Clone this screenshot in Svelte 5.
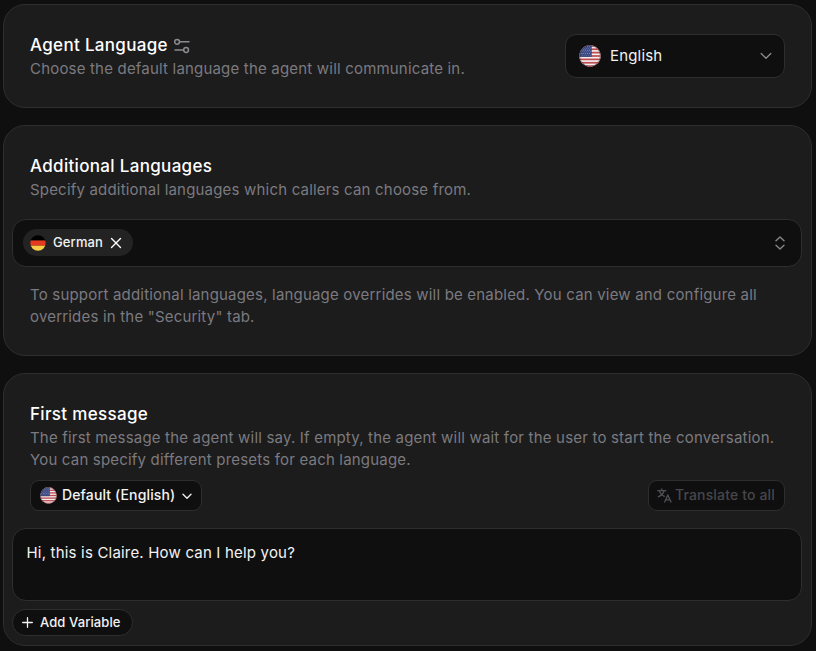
<script>
  const stripes = [0, 2, 4, 6, 8, 10, 12];
  const starRows = [1, 3, 5];
  const starCols = [1.5, 4, 6.5, 9, 11.5];
</script>

{#snippet usFlag(size, id)}
  <svg width={size} height={size} viewBox="0 0 26 26" aria-hidden="true">
    <clipPath {id}><circle cx="13" cy="13" r="12.6" /></clipPath>
    <g clip-path="url(#{id})">
      <rect width="26" height="26" fill="#f1eeee" />
      {#each stripes as row}
        <rect y={row * 2} width="26" height="2" fill="#bd4b50" />
      {/each}
      <rect width="15" height="14" fill="#38477f" />
      {#each starRows as y}
        {#each starCols as x}
          <circle cx={x + 1} cy={y * 2} r=".65" fill="#9ba4c9" />
          <circle cx={x + 2.2} cy={y * 2 + 2} r=".55" fill="#8b96bf" />
        {/each}
      {/each}
      <circle cx="13" cy="13" r="12.3" fill="none" stroke="#33242b" stroke-opacity=".5" />
    </g>
  </svg>
{/snippet}

<main>
  <section class="card language">
    <div class="head">
      <h2>Agent Language
        <svg width="16" height="16" viewBox="0 0 16 16" fill="none" stroke="#8b8b8f" stroke-width="1.5" stroke-linecap="round">
          <circle cx="3.1" cy="3.8" r="2.4" /><path d="M6 3.8H15M1 12H9.5" /><circle cx="12.1" cy="12" r="2.4" />
        </svg>
      </h2>
      <p>Choose the default language the agent will communicate in.</p>
    </div>
    <button class="select">
      {@render usFlag(22, "flag-large")}
      <span>English</span>
      <svg width="12" height="8" viewBox="0 0 12 8" fill="none" stroke="#8d8d91" stroke-width="1.3" stroke-linecap="round" stroke-linejoin="round"><path d="M1.2 1.5 6 6.3l4.8-4.8" /></svg>
    </button>
  </section>

  <section class="card additional">
    <div class="head">
      <h2>Additional Languages</h2>
      <p>Specify additional languages which callers can choose from.</p>
    </div>
    <div class="multi">
      <span class="chip">
        <svg width="16" height="16" viewBox="0 0 16 16"><clipPath id="german"><circle cx="8" cy="8" r="7.7" /></clipPath><g clip-path="url(#german)"><rect width="16" height="5.5" fill="#000" /><rect y="5.5" width="16" height="5.2" fill="#e43b20" /><rect y="10.7" width="16" height="5.3" fill="#f8ce46" /></g></svg>
        <span>German</span>
        <svg class="close" width="12" height="12" viewBox="0 0 12 12" fill="none" stroke="#fff" stroke-width="1.4" stroke-linecap="round"><path d="m1.5 1.5 9 9m0-9-9 9" /></svg>
      </span>
      <svg width="10" height="14" viewBox="0 0 10 14" fill="none" stroke="#858589" stroke-width="1.4" stroke-linecap="round" stroke-linejoin="round"><path d="M1 4.8 5 .9l4 3.9M1 9.2l4 3.9 4-3.9" /></svg>
    </div>
    <p class="note">To support additional languages, language overrides will be enabled. You can view and configure all<br />overrides in the "Security" tab.</p>
  </section>

  <section class="card message">
    <div class="head">
      <h2>First message</h2>
      <p>The first message the agent will say. If empty, the agent will wait for the user to start the conversation.<br />You can specify different presets for each language.</p>
    </div>
    <div class="actions">
      <button class="preset">
        {@render usFlag(17, "flag-small")}
        <span>Default (English)</span>
        <svg width="10" height="7" viewBox="0 0 10 7" fill="none" stroke="#ededed" stroke-width="1.4" stroke-linecap="round" stroke-linejoin="round"><path d="m1 1.3 4 4 4-4" /></svg>
      </button>
      <button class="translate" disabled>
        <svg width="15" height="15" viewBox="0 0 15 15" fill="none" stroke="#515155" stroke-width="1.3" stroke-linecap="round" stroke-linejoin="round"><path d="M.8 2.7h8M4.8 1v1.7M7.1 2.7C6.3 5.5 4.2 7.5 1.3 8.8M2.6 3.8c1 2 2.6 3.6 4.6 4.6M7.7 14l3.1-7.1 3.2 7.1M8.6 11.9H13" /></svg>
        <span>Translate to all</span>
      </button>
    </div>
    <div class="textbox" role="textbox" tabindex="0">Hi, this is Claire. How can I help you?</div>
    <button class="variable">
      <svg width="11" height="11" viewBox="0 0 11 11" stroke="#f2f2f2" stroke-width="1.3" stroke-linecap="round"><path d="M5.5.7v9.6M.7 5.5h9.6" /></svg>
      <span>Add Variable</span>
    </button>
  </section>
</main>

<style>
  :global(body) { background: #0f0f0f; overflow: hidden; }
  * { box-sizing: border-box; }
  main {
    width: 816px; height: 651px; padding: 4px 4px 0 3px;
    display: flex; flex-direction: column; gap: 17px;
    font-family: Inter, sans-serif; font-size: 15px; color: #f3f3f3;
    white-space: nowrap;
  }
  .card { flex: none; background: #1c1c1c; border: 1px solid #2e2e2e; border-radius: 22px; }
  .language { height: 104px; padding: 29px 26px 0; display: flex; justify-content: space-between; }
  .additional { height: 231px; padding: 29px 9px 0 8px; }
  .message { height: 273px; padding: 29px 9px 0 8px; }
  .additional .head, .message .head { padding-left: 18px; }
  h2 { margin: 0; height: 23px; line-height: 23px; font-size: 17px; font-weight: 500; color: #fff; display: flex; align-items: center; gap: 6px; letter-spacing: .32px; }
  p { margin: 0; line-height: 22px; letter-spacing: .19px; color: #7b7a80; }
  .head p { padding-top: 1px; }
  button { font: inherit; color: inherit; background: #0f0f0f; border: 1px solid #2e2e2e; padding: 0; display: flex; align-items: center; white-space: nowrap; }
  .select { width: 220px; height: 44px; border-radius: 11px; padding: 0 12px 0 13px; letter-spacing: .18px; }
  .select span { margin-left: 9px; flex: 1; text-align: left; padding-bottom: 2px; }
  .multi { height: 48px; margin-top: 18px; padding: 0 16px 0 10px; display: flex; align-items: center; justify-content: space-between; background: #0f0f0f; border: 1px solid #2e2e2e; border-radius: 14px; }
  .chip { height: 27px; width: 110px; margin-bottom: 1px; display: flex; align-items: center; padding-left: 7px; background: #232323; border-radius: 14px; font-size: 13px; font-weight: 500; letter-spacing: .12px; }
  .chip span { margin-left: 7px; padding-bottom: 2px; }
  .close { margin-left: 7px; }
  .note { padding: 17px 0 0 18px; }
  .actions { height: 31px; margin: 9px 17px 0 18px; display: flex; justify-content: space-between; }
  .preset, .translate { border-radius: 9px; font-size: 14px; font-weight: 500; padding-bottom: 1px; }
  .preset { width: 172px; padding-left: 9px; letter-spacing: .14px; }
  .preset span { margin: 0 7px 0 5px; padding-bottom: 2px; }
  .preset svg:last-child { margin-top: 2px; }
  .translate { width: 137px; padding-left: 8px; color: #47464b; letter-spacing: .15px; }
  .translate svg { margin-top: 1px; }
  .translate span { margin-left: 3px; padding-bottom: 2px; }
  .textbox { margin-top: 17px; height: 73px; padding: 13px 13.5px; border: 1px solid #2e2e2e; border-radius: 14px; background: #0f0f0f; line-height: 22px; letter-spacing: .19px; }
  .variable { margin-top: 8px; height: 27px; width: 121px; padding-left: 9px; border-radius: 14px; font-size: 13px; font-weight: 500; letter-spacing: .1px; }
  .variable span { margin-left: 7px; padding-bottom: 2px; }
</style>
